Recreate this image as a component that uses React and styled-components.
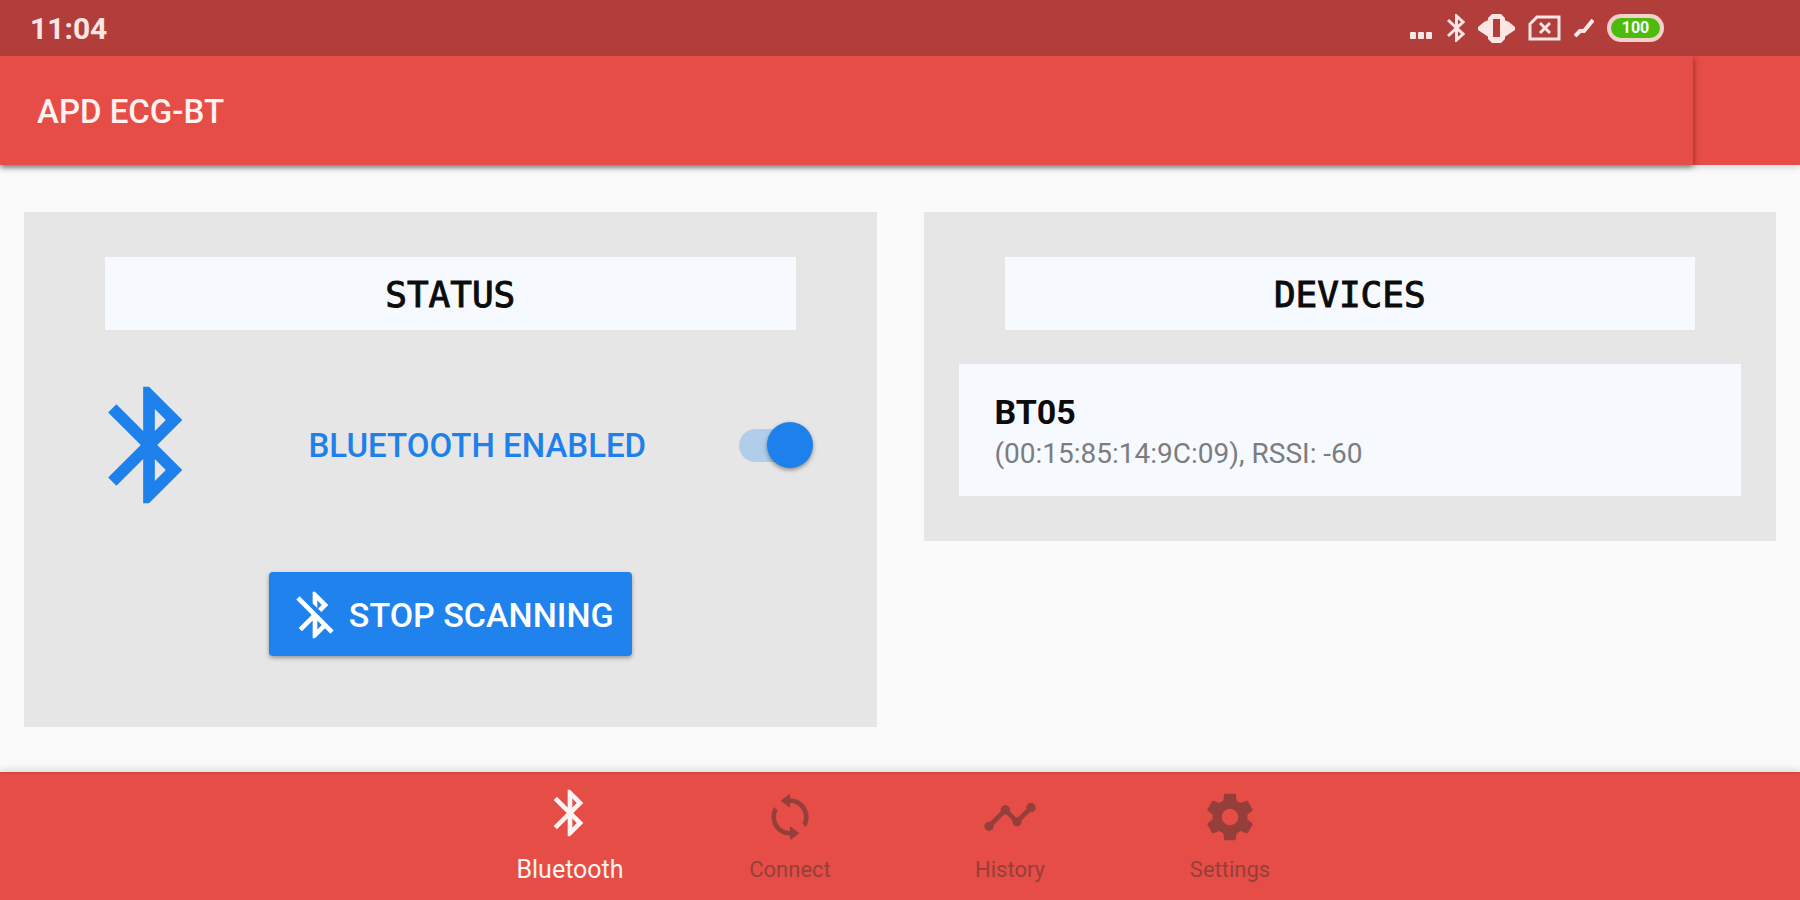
import React, { useState } from "react";
import styled, { createGlobalStyle } from "styled-components";

const GlobalStyle = createGlobalStyle`
  *, *::before, *::after { box-sizing: border-box; }
  body {
    margin: 0;
    background: #fafafa;
    font-family: Roboto, "Liberation Sans", sans-serif;
  }
`;

const Screen = styled.div`
  min-height: 100vh;
  display: flex;
  flex-direction: column;
`;

const StatusBar = styled.div`
  height: 56px;
  padding: 0 136px 0 30px;
  display: flex;
  align-items: center;
  justify-content: space-between;
  background: #b23e3b;
  color: #fbe6e3;
`;

const Clock = styled.time`
  padding-top: 2px;
  font-size: 30px;
  line-height: 36px;
  font-weight: 700;
`;

const SystemIcons = styled.div`
  display: flex;
  align-items: center;
  gap: 13px;

  svg { display: block; }
`;

const Battery = styled.span`
  width: 57px;
  height: 28px;
  border: 4px solid #f3d0cb;
  border-radius: 14px;
  display: flex;
  align-items: center;
  justify-content: center;
  background: #4abd0c;
  color: #fff;
  font-size: 16px;
  line-height: 20px;
  font-weight: 700;
`;

const AppBarArea = styled.header`
  padding-right: 107px;
  background: #e64d46;
  box-shadow: 0 2px 6px rgba(60, 90, 100, 0.25);
`;

const AppBar = styled.div`
  height: 109px;
  padding: 2px 37px 0;
  display: flex;
  align-items: center;
  background: #e64d46;
  box-shadow: 0 2px 6px rgba(0, 0, 0, 0.5);
  clip-path: inset(0 -12px -12px 0);
`;

const AppTitle = styled.h1`
  margin: 0;
  color: #fff2f0;
  font-size: 33px;
  line-height: 40px;
  font-weight: 500;
`;

const Content = styled.main`
  flex: 1;
  padding: 47px 24px 45px;
  display: grid;
  grid-template-columns: 1fr 1fr;
  gap: 47px;
  align-items: start;
`;

const Panel = styled.section`
  padding: 45px 0;
  background: #e6e6e7;
`;

const PanelTitle = styled.h2`
  margin: 0 81px;
  padding: 18px 0 15px;
  background: #f6faff;
  color: #0c0c0c;
  text-align: center;
  font-family: "DejaVu Sans Mono", monospace;
  font-size: 36px;
  line-height: 40px;
  font-weight: 400;
  -webkit-text-stroke: 1px currentColor;
`;

const BluetoothRow = styled.div`
  margin-top: 45px;
  display: grid;
  grid-template-columns: 5fr 8fr 4fr;
  align-items: center;
  justify-items: center;
  color: #1e80ea;

  svg { display: block; }
`;

const SwitchLabel = styled.label`
  padding: 2px 0 0 4px;
  font-size: 33px;
  line-height: 40px;
  font-weight: 500;
  white-space: nowrap;
`;

const Switch = styled.input`
  appearance: none;
  width: 68px;
  height: 33px;
  margin: 0 6px 0 0;
  border-radius: 17px;
  background: #b0cdea;
  display: flex;
  align-items: center;
  cursor: pointer;

  &::before {
    content: "";
    flex: none;
    width: 46px;
    height: 46px;
    margin-left: ${(p) => (p.checked ? "28px" : "-6px")};
    border-radius: 50%;
    background: #1e80ea;
    box-shadow: 0 2px 4px rgba(0, 0, 0, 0.4);
  }
`;

const ScanButton = styled.button`
  height: 84px;
  margin: 57px auto 26px;
  padding: 2px 18px 0;
  border: 0;
  border-radius: 4px;
  display: flex;
  align-items: center;
  gap: 6px;
  background: #2083ed;
  box-shadow: 0 2px 4px rgba(0, 0, 0, 0.35);
  color: #fff;
  font-family: inherit;
  font-size: 34px;
  line-height: 40px;
  font-weight: 500;
  white-space: nowrap;
  cursor: pointer;
`;

const DeviceList = styled.ul`
  margin: 34px 35px 0;
  padding: 0;
  list-style: none;
`;

const Device = styled.li`
  padding: 26px 36px 22px;
  background: #f6faff;
`;

const DeviceName = styled.div`
  color: #0c0c0c;
  font-size: 34px;
  line-height: 44px;
  font-weight: 700;
`;

const DeviceInfo = styled.div`
  color: #7b7d7f;
  font-size: 28px;
  line-height: 40px;
`;

const BottomNav = styled.nav`
  height: 128px;
  display: flex;
  justify-content: center;
  background: #e64d46;
  border-top: 2px solid #dc443e;
  box-shadow: 0 -1px 8px rgba(60, 90, 90, 0.25);
`;

const NavItem = styled.a`
  width: 220px;
  padding-bottom: 15px;
  display: flex;
  flex-direction: column;
  align-items: center;
  justify-content: flex-end;
  gap: ${(p) => (p.$active ? "14px" : "10px")};
  color: ${(p) => (p.$active ? "#fff4f2" : "#963f3a")};
  font-size: ${(p) => (p.$active ? "25px" : "22px")};
  line-height: 30px;
  text-decoration: none;

  svg { display: block; }
`;

const paths = {
  bluetooth:
    "M17.71 7.71L12 2h-1v7.59L6.41 5 5 6.41 10.59 12 5 17.59 6.41 19 11 14.41V22h1l5.71-5.71-4.3-4.29 4.3-4.29zM13 5.83l1.88 1.88L13 9.59V5.83zm1.88 10.46L13 18.17v-3.76l1.88 1.88z",
  bluetoothOff:
    "M13 5.83l1.88 1.88-1.6 1.6 1.41 1.41 3.02-3.02L12 2h-1v5.03l2 2v-3.2zM5.41 4L4 5.41 10.59 12 5 17.59 6.41 19 11 14.41V22h1l4.29-4.29 2.3 2.29L20 18.59 5.41 4zM13 18.17v-3.76l1.88 1.88L13 18.17z",
  sync:
    "M12 4V2L8 5l4 3V6c3.31 0 6 2.69 6 6 0 1.01-.25 1.97-.7 2.8l1.46 1.46C19.54 15.03 20 13.57 20 12c0-4.42-3.58-8-8-8zM12 18c-3.31 0-6-2.69-6-6 0-1.01.25-1.97.7-2.8L5.24 7.74C4.46 8.97 4 10.43 4 12c0 4.42 3.58 8 8 8v2l4-3-4-3v2z",
  timeline:
    "M23 8c0 1.1-.9 2-2 2-.18 0-.35-.02-.51-.07l-3.56 3.55c.05.16.07.34.07.52 0 1.1-.9 2-2 2s-2-.9-2-2c0-.18.02-.36.07-.52l-2.55-2.55c-.16.05-.34.07-.52.07s-.36-.02-.52-.07l-4.55 4.56c.05.16.07.33.07.51 0 1.1-.9 2-2 2s-2-.9-2-2 .9-2 2-2c.18 0 .35.02.51.07l4.56-4.55C8.02 9.36 8 9.18 8 9c0-1.1.9-2 2-2s2 .9 2 2c0 .18-.02.36-.07.52l2.55 2.55c.16-.05.34-.07.52-.07s.36.02.52.07l3.55-3.56C19.02 8.35 19 8.18 19 8c0-1.1.9-2 2-2s2 .9 2 2z",
  settings:
    "M19.43 12.98c.04-.32.07-.64.07-.98s-.03-.66-.07-.98l2.11-1.65c.19-.15.24-.42.12-.64l-2-3.46c-.12-.22-.39-.3-.61-.22l-2.49 1c-.52-.4-1.08-.73-1.69-.98l-.38-2.65C14.46 2.18 14.25 2 14 2h-4c-.25 0-.46.18-.49.42l-.38 2.65c-.61.25-1.17.59-1.69.98l-2.49-1c-.23-.09-.49 0-.61.22l-2 3.46c-.13.22-.07.49.12.64l2.11 1.65c-.04.32-.07.65-.07.98s.03.66.07.98l-2.11 1.65c-.19.15-.24.42-.12.64l2 3.46c.12.22.39.3.61.22l2.49-1c.52.4 1.08.73 1.69.98l.38 2.65c.03.24.24.42.49.42h4c.25 0 .46-.18.49-.42l.38-2.65c.61-.25 1.17-.59 1.69-.98l2.49 1c.23.09.49 0 .61-.22l2-3.46c.12-.22.07-.49-.12-.64l-2.11-1.65zM12 15.5c-1.93 0-3.5-1.57-3.5-3.5s1.57-3.5 3.5-3.5 3.5 1.57 3.5 3.5-1.57 3.5-3.5 3.5z",
};

function Icon({ name, size = 56 }) {
  return (
    <svg width={size} height={size} viewBox="0 0 24 24" fill="currentColor" aria-hidden="true">
      <path d={paths[name]} />
    </svg>
  );
}

function SystemTray() {
  return (
    <SystemIcons>
      <svg width="24" height="28" viewBox="0 0 24 28" fill="currentColor" aria-hidden="true">
        <rect x="0" y="18" width="6" height="7" rx="1" />
        <rect x="8" y="18" width="6" height="7" rx="1" />
        <rect x="16" y="18" width="6" height="7" rx="1" />
      </svg>
      <svg width="18" height="28" viewBox="0 0 18 28" fill="none" stroke="currentColor" strokeWidth="3" aria-hidden="true">
        <path d="M1 6L16 20L9.500 26V2L16 8L1 22" />
      </svg>
      <svg width="37" height="29" viewBox="0 0 37 29" fill="currentColor" aria-hidden="true">
        <path fillRule="evenodd" d="M14 0h9l4 4v21l-4 4h-9l-4-4V4zM15 5v18h7V5z" />
        <path d="M10.500 6v17L6 20L0 16v-3L6 8zM26.500 6v17l4.500-3 6-4v-3l-6-5z" />
      </svg>
      <svg width="33" height="26" viewBox="0 0 33 26" fill="none" stroke="currentColor" strokeWidth="3" aria-hidden="true">
        <path d="M9 2H31V24H2V9z" />
        <path d="M12 8L22 18M22 8L12 18" />
      </svg>
      <svg width="20" height="20" viewBox="0 0 20 20" fill="none" stroke="currentColor" strokeWidth="4" aria-hidden="true">
        <path d="M1 18L6 13H10L19 2" />
      </svg>
      <Battery aria-label="Battery 100 percent">100</Battery>
    </SystemIcons>
  );
}

const devices = [{ name: "BT05", address: "00:15:85:14:9C:09", rssi: -60 }];

const tabs = [
  { id: "bluetooth", label: "Bluetooth", icon: "bluetooth" },
  { id: "connect", label: "Connect", icon: "sync" },
  { id: "history", label: "History", icon: "timeline" },
  { id: "settings", label: "Settings", icon: "settings" },
];

export default function App() {
  const [enabled, setEnabled] = useState(true);
  const [tab, setTab] = useState("bluetooth");

  return (
    <Screen>
      <GlobalStyle />
      <StatusBar>
        <Clock>11:04</Clock>
        <SystemTray />
      </StatusBar>
      <AppBarArea>
        <AppBar>
          <AppTitle>APD ECG-BT</AppTitle>
        </AppBar>
      </AppBarArea>
      <Content>
        <Panel>
          <PanelTitle>STATUS</PanelTitle>
          <BluetoothRow>
            <Icon name="bluetooth" size={140} />
            <SwitchLabel htmlFor="bt-switch">
              {enabled ? "BLUETOOTH ENABLED" : "BLUETOOTH DISABLED"}
            </SwitchLabel>
            <Switch
              id="bt-switch"
              type="checkbox"
              role="switch"
              checked={enabled}
              onChange={(e) => setEnabled(e.target.checked)}
            />
          </BluetoothRow>
          <ScanButton type="button">
            <Icon name="bluetoothOff" />
            STOP SCANNING
          </ScanButton>
        </Panel>
        <Panel>
          <PanelTitle>DEVICES</PanelTitle>
          <DeviceList>
            {devices.map((d) => (
              <Device key={d.address}>
                <DeviceName>{d.name}</DeviceName>
                <DeviceInfo>{`(${d.address}), RSSI: ${d.rssi}`}</DeviceInfo>
              </Device>
            ))}
          </DeviceList>
        </Panel>
      </Content>
      <BottomNav>
        {tabs.map((t) => (
          <NavItem
            key={t.id}
            href={`#${t.id}`}
            $active={t.id === tab}
            aria-current={t.id === tab ? "page" : undefined}
            onClick={() => setTab(t.id)}
          >
            <Icon name={t.icon} />
            {t.label}
          </NavItem>
        ))}
      </BottomNav>
    </Screen>
  );
}
